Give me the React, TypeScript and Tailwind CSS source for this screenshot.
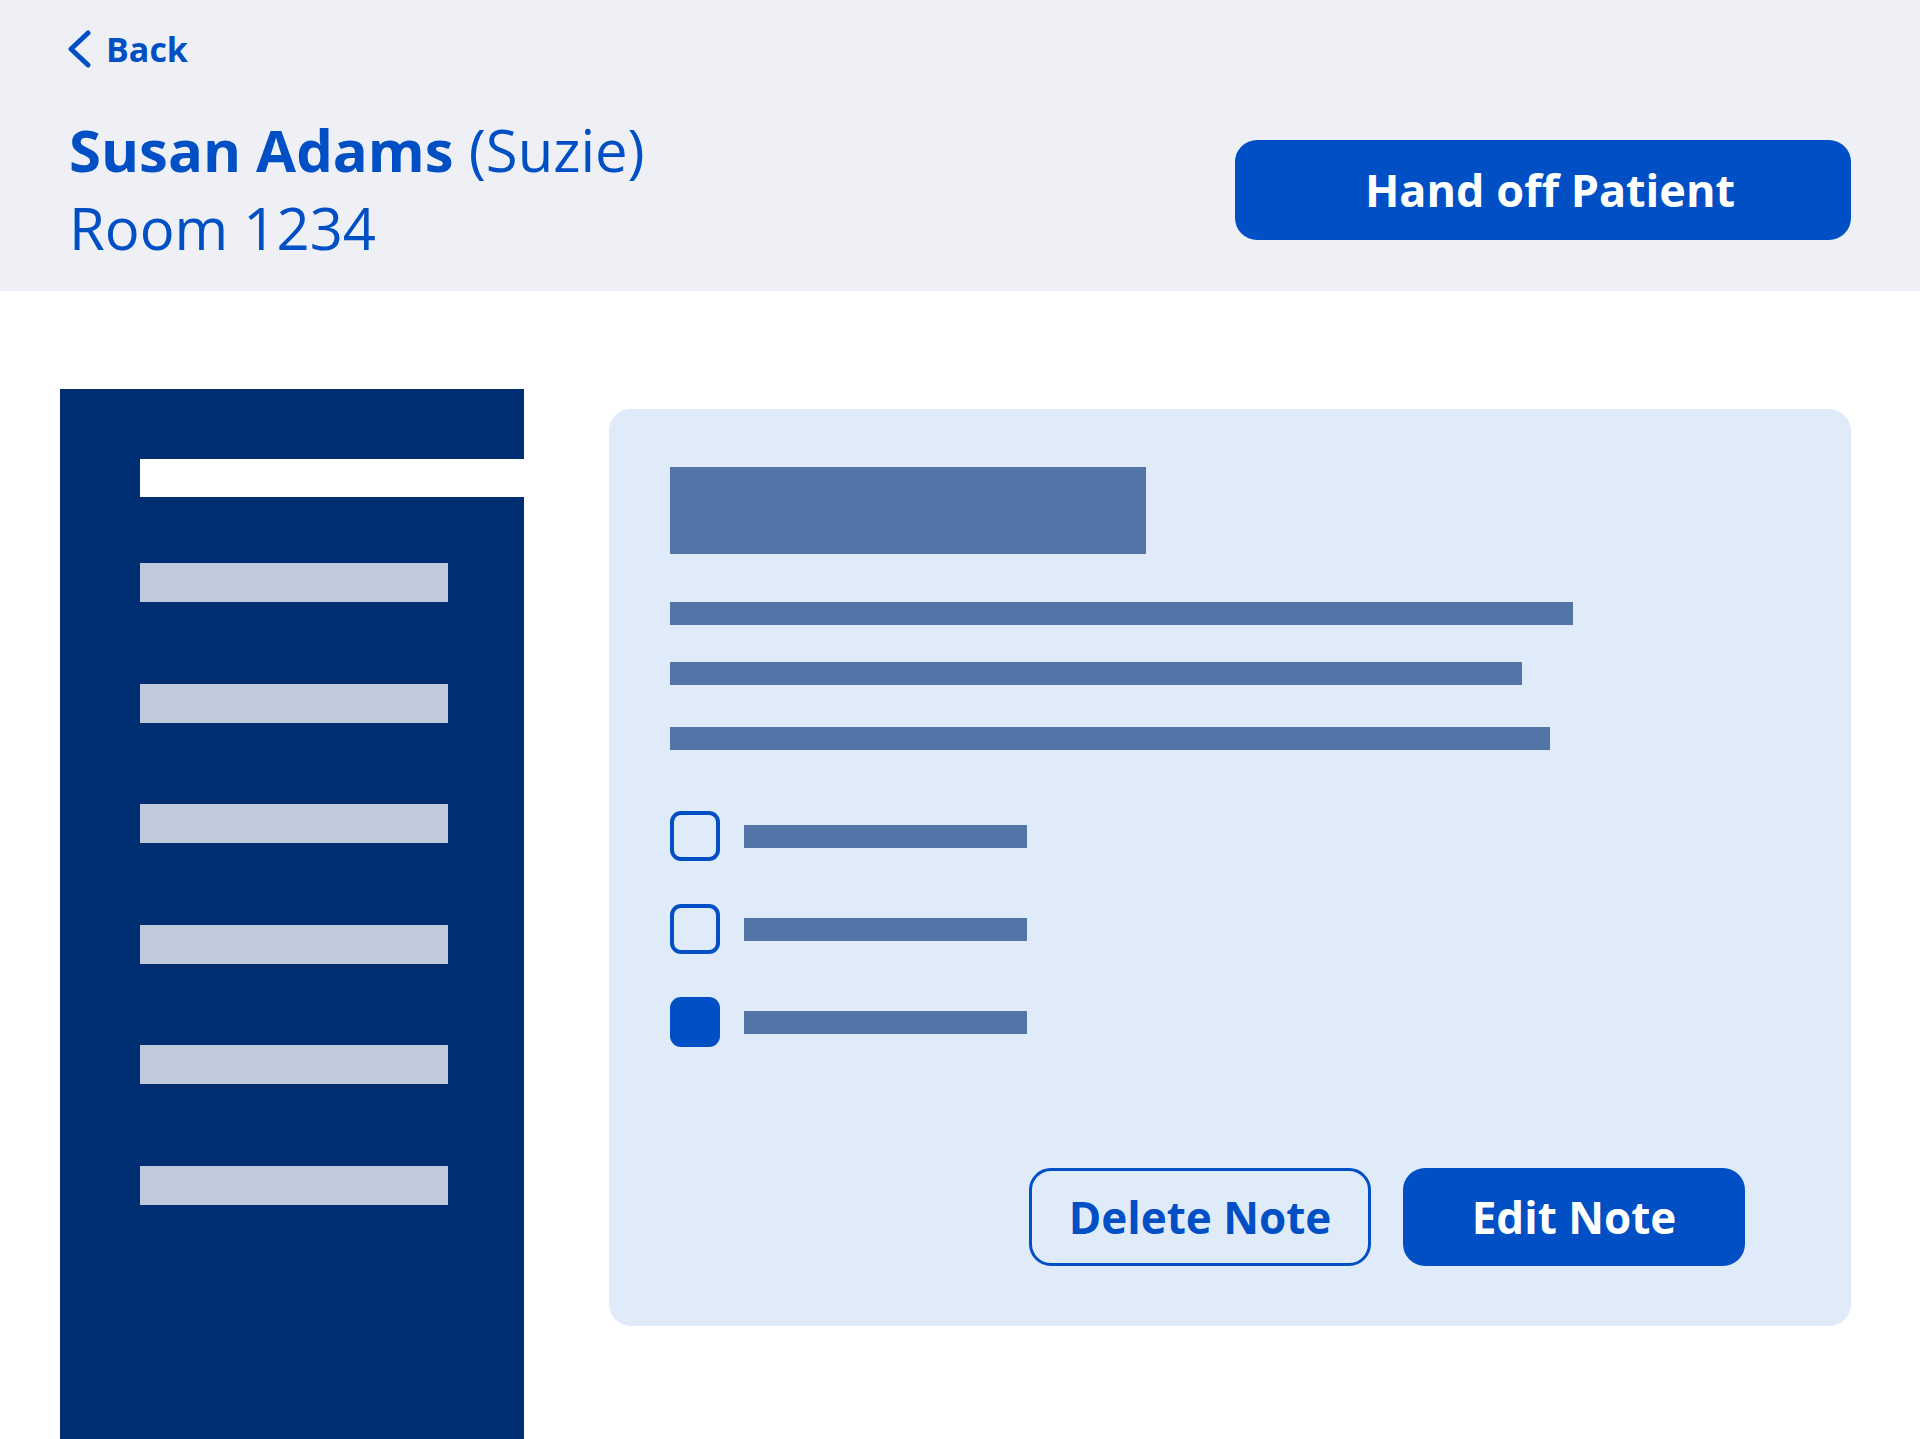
import React from 'react';

const navItems = [0, 1, 2, 3, 4, 5];

const checklist = [
  { id: 1, done: false },
  { id: 2, done: false },
  { id: 3, done: true },
];

export default function App() {
  return (
    <div
      className="flex min-h-screen flex-col bg-white"
      style={{ fontFamily: '"Open Sans", "Noto Sans", sans-serif' }}
    >
      {/* Header */}
      <header className="h-[291px] bg-[#EEF0F5] pl-[67px] pr-[69px] pt-[29px]">
        <button className="flex h-[40px] items-center gap-[15px] text-[34px] font-bold leading-[40px] text-[#004FC4]">
          <svg width="24" height="38" viewBox="0 0 24 38" fill="none">
            <polyline
              points="21,3 4,19 21,35"
              stroke="#004FC4"
              strokeWidth="5"
              strokeLinecap="round"
              strokeLinejoin="round"
            />
          </svg>
          <span>Back</span>
        </button>

        <div className="mt-[41.5px] flex items-center justify-between">
          <div className="ml-[2px] text-[58px] leading-[78px] text-[#004FC4]">
            <div>
              <span className="font-bold">Susan Adams</span>{' '}
              <span className="font-normal">(Suzie)</span>
            </div>
            <div className="font-normal">Room 1234</div>
          </div>
          <button className="mt-[3px] h-[100px] w-[616px] rounded-[22px] bg-[#004FC4] pl-[14px] text-[45px] font-bold text-white">
            Hand off Patient
          </button>
        </div>
      </header>

      {/* Body */}
      <div className="flex flex-1 items-start gap-[85px] pl-[60px] pr-[69px] pt-[98px]">
        {/* Sidebar */}
        <nav className="flex w-[464px] flex-col self-stretch bg-[#002E72] pt-[70px]">
          <div className="ml-[80px] h-[38px] bg-white" />
          <div className="mt-[66px] flex flex-col gap-[81.5px]">
            {navItems.map((i) => (
              <div key={i} className="ml-[80px] h-[39px] w-[308px] bg-[#BFCBDD]" />
            ))}
          </div>
        </nav>

        {/* Note card */}
        <section className="mt-[20px] flex-1 rounded-[22px] bg-[#E0EBFA] pb-[60px] pl-[61px] pr-[106px] pt-[58px]">
          <div className="h-[87px] w-[476px] bg-[#5274A6]" />
          <div className="mt-[48px] h-[23px] w-[903px] bg-[#5274A6]" />
          <div className="mt-[37px] h-[23px] w-[852px] bg-[#5274A6]" />
          <div className="mt-[42px] h-[23px] w-[880px] bg-[#5274A6]" />

          <div className="mt-[61px] flex flex-col gap-[43px]">
            {checklist.map((item) => (
              <div key={item.id} className="flex items-center gap-[24px]">
                {item.done ? (
                  <div className="h-[50px] w-[50px] rounded-[11px] bg-[#004FC4]" />
                ) : (
                  <div className="h-[50px] w-[50px] rounded-[11px] border-[4px] border-[#004FC4]" />
                )}
                <div className="h-[23px] w-[283px] bg-[#5274A6]" />
              </div>
            ))}
          </div>

          <div className="mt-[121px] flex justify-end gap-[32px]">
            <button className="h-[98px] w-[342px] rounded-[22px] border-[3.5px] border-[#004FC4] text-[44px] font-bold text-[#004FC4]">
              Delete Note
            </button>
            <button className="h-[98px] w-[342px] rounded-[22px] bg-[#004FC4] text-[44px] font-bold text-white">
              Edit Note
            </button>
          </div>
        </section>
      </div>
    </div>
  );
}
